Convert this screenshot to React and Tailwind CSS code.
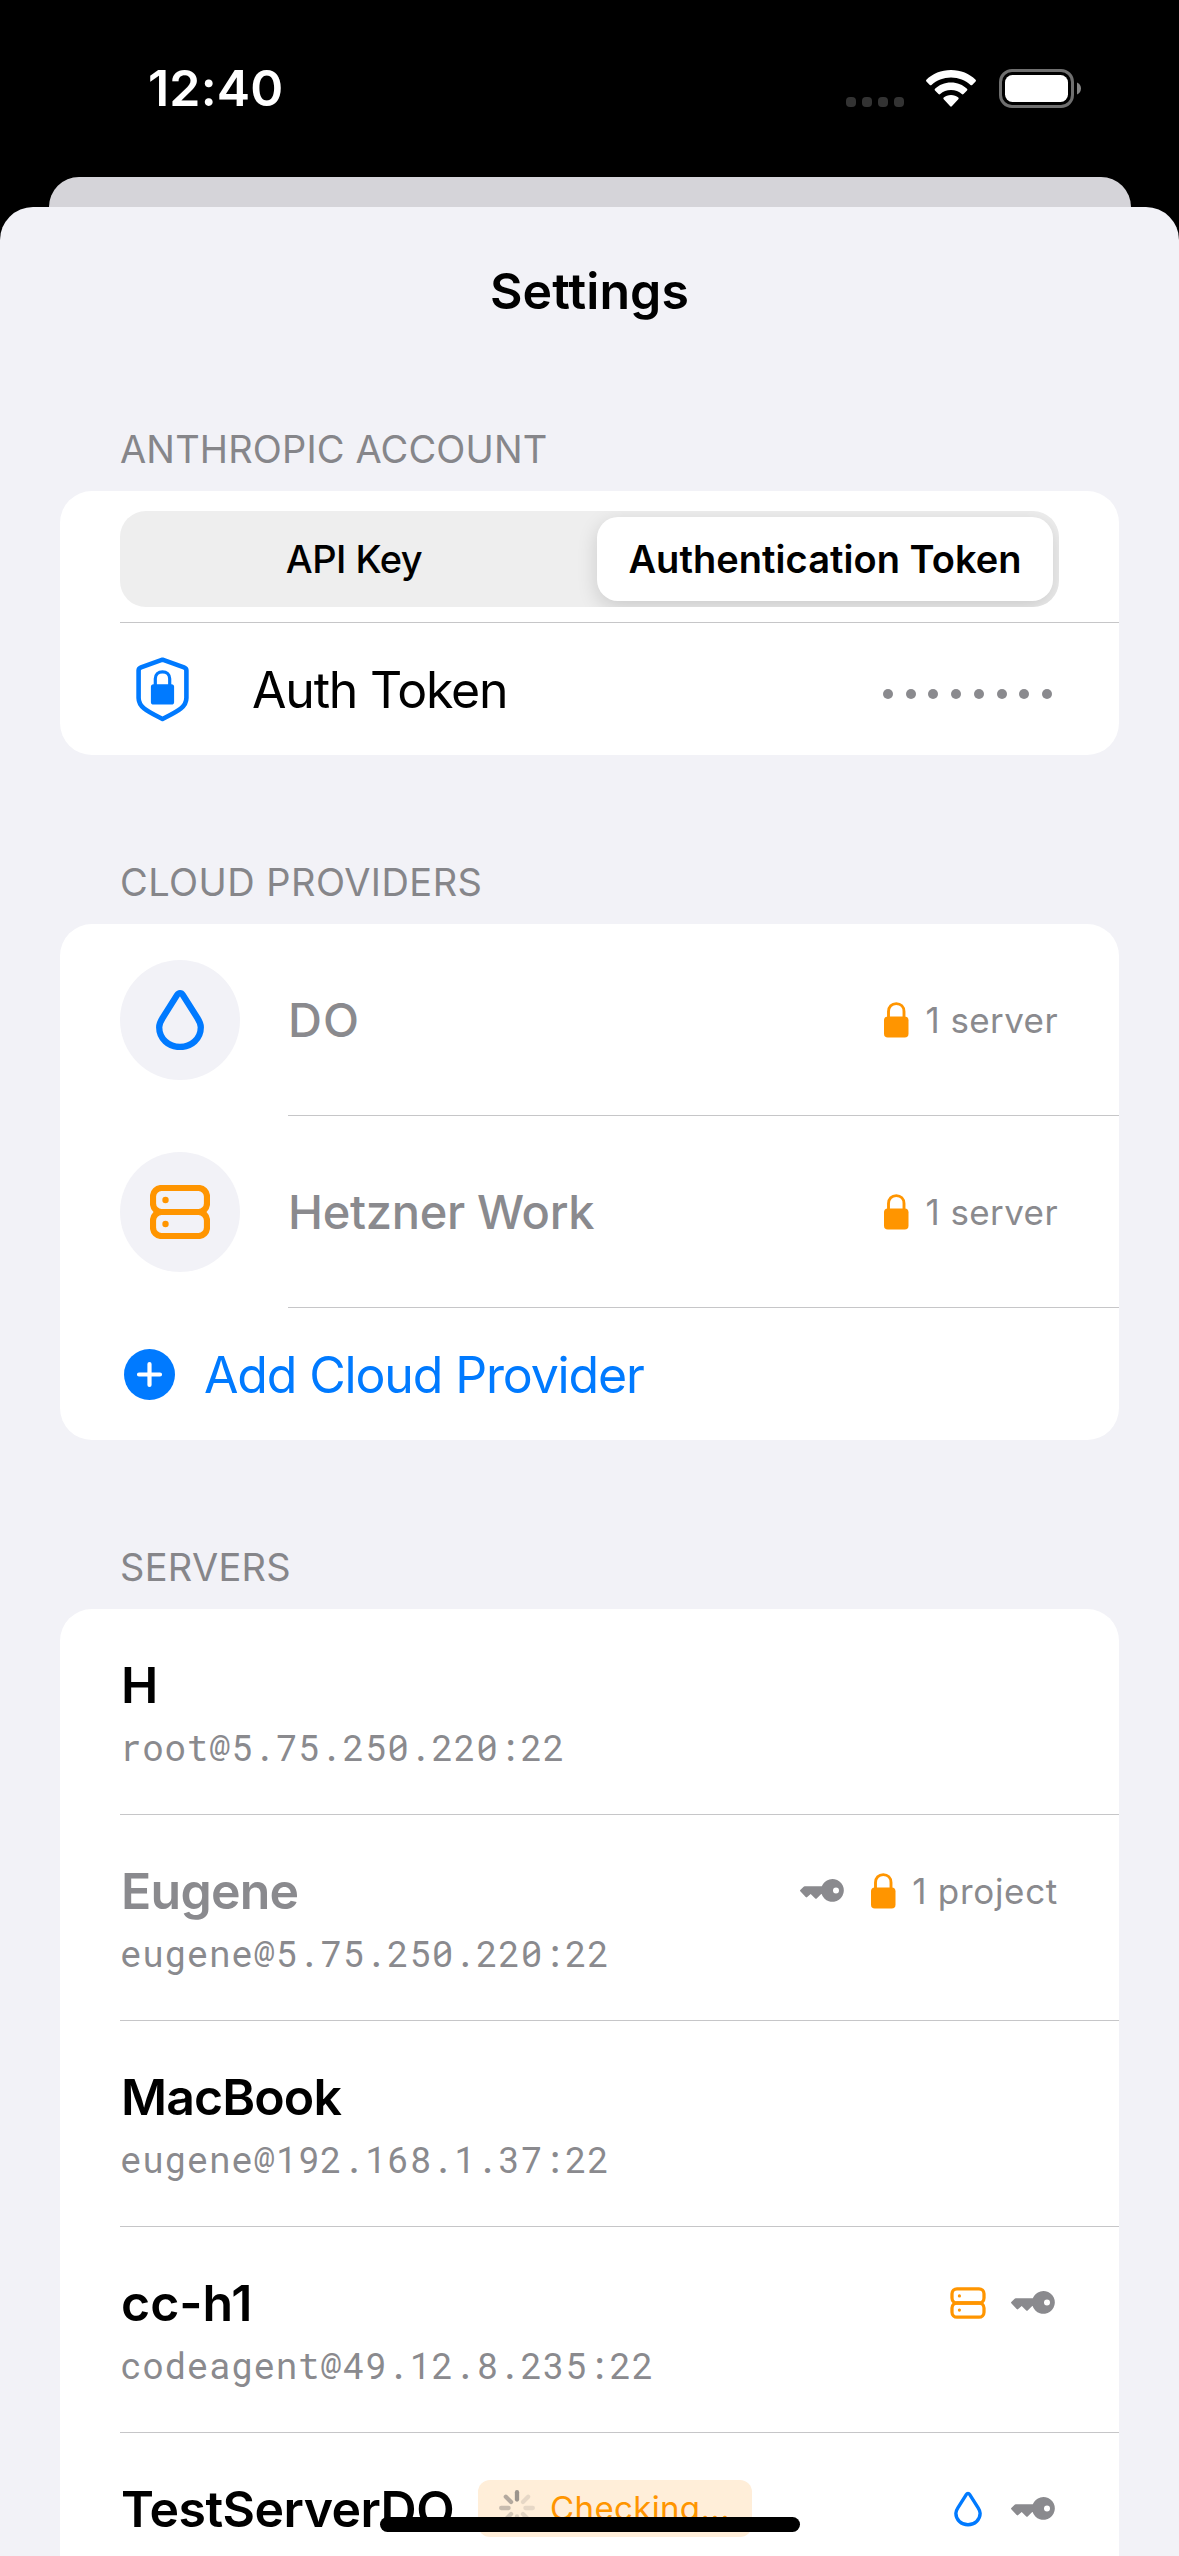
function WifiIcon() {
  return (
    <svg width="50" height="37" viewBox="0 0 50 37" fill="#fff">
      <path d="M25 0C34.800 0 43.500 3.700 49.600 9.700C50.100 10.200 50.100 10.900 49.600 11.400L46.200 14.900C45.700 15.400 45 15.400 44.500 14.900C39.400 10.300 32.600 7.500 25 7.500C17.400 7.500 10.600 10.300 5.500 14.900C5 15.400 4.300 15.400 3.800 14.900L.4 11.400C-.1 10.900-.1 10.200 .4 9.700C6.500 3.700 15.200 0 25 0Z" />
      <path d="M25 12.500C31.400 12.500 36.900 14.900 41 18.800C41.500 19.300 41.500 20 41 20.500L37.500 24C37 24.500 36.300 24.500 35.800 24C33 21.500 29.200 20 25 20C20.800 20 17 21.500 14.200 24C13.700 24.500 13 24.500 12.500 24L9 20.500C8.500 20 8.500 19.300 9 18.800C13.100 14.900 18.600 12.500 25 12.500Z" />
      <path d="M25 25C27.900 25 30.400 26 32.300 27.600C32.800 28.100 32.800 28.800 32.300 29.300L25.800 36.300C25.300 36.800 24.700 36.800 24.200 36.300L17.700 29.300C17.200 28.800 17.200 28.100 17.700 27.600C19.600 26 22.100 25 25 25Z" />
    </svg>
  );
}

function BatteryIcon() {
  return (
    <svg width="82" height="39" viewBox="0 0 82 39">
      <rect x="1.500" y="1.500" width="72" height="36" rx="11.500" fill="none" stroke="#6f6f6f" strokeWidth="3" />
      <rect x="6" y="6" width="63" height="27" rx="7.500" fill="#fff" />
      <path d="M78 13.500C80.400 14.500 82 16.800 82 19.500S80.400 24.500 78 25.500Z" fill="#858585" />
    </svg>
  );
}

function ShieldIcon() {
  return (
    <svg width="53" height="65" viewBox="0 0 53 65" fill="none" stroke="#007aff">
      <path d="M26.500 2.700L48 10.300C49.600 10.900 50.400 11.800 50.400 13.400V41C50.400 50.500 41 54.500 26.500 62C12 54.500 2.600 50.500 2.600 41V13.400C2.600 11.800 3.400 10.900 5 10.300Z" strokeWidth="4.600" strokeLinejoin="round" />
      <rect x="14.900" y="27.200" width="23.200" height="20.300" rx="2.600" fill="#007aff" stroke="none" />
      <path d="M19.300 29V21.800C19.300 17.600 22.300 14.800 26.500 14.800S33.700 17.600 33.700 21.800V29" strokeWidth="3.200" />
    </svg>
  );
}

function DropIcon({ width, height, stroke }) {
  return (
    <svg width={width} height={height} viewBox="0 0 48 60" fill="none" stroke="#007aff" strokeWidth={stroke} strokeLinejoin="round">
      <path d="M24 3.200C22.700 3.200 21.800 3.900 21 5.200L6.600 28C4.300 31.600 3.200 34.300 3.200 37.300C3.200 48.600 12.500 57 24 57S44.800 48.600 44.800 37.300C44.800 34.300 43.700 31.600 41.400 28L27 5.200C26.200 3.900 25.300 3.200 24 3.200Z" />
    </svg>
  );
}

function ServerIcon({ width, height, stroke, dot }) {
  return (
    <svg width={width} height={height} viewBox="0 0 60 54" fill="none" stroke="#ff9500" strokeWidth={stroke}>
      <rect x="3" y="3" width="54" height="24" rx="8.500" />
      <rect x="3" y="27" width="54" height="24" rx="8.500" />
      <circle cx="15.500" cy="15" r={dot} fill="#ff9500" stroke="none" />
      <circle cx="15.500" cy="39" r={dot} fill="#ff9500" stroke="none" />
    </svg>
  );
}

function PlusIcon() {
  return (
    <svg width="51" height="51" viewBox="0 0 51 51">
      <circle cx="25.500" cy="25.500" r="25.500" fill="#007aff" />
      <path d="M25.500 15V36M15 25.500H36" stroke="#fff" strokeWidth="4.200" strokeLinecap="round" />
    </svg>
  );
}

function LockIcon() {
  return (
    <svg width="25" height="36" viewBox="0 0 25 36">
      <rect x="0" y="14.500" width="24.500" height="21" rx="3.800" fill="#ff9500" />
      <path d="M4.500 17V9.600C4.500 4.800 7.800 1.600 12.250 1.600S20 4.800 20 9.600V17" fill="none" stroke="#ff9500" strokeWidth="2.900" />
    </svg>
  );
}

function KeyIcon() {
  return (
    <svg width="44" height="23" viewBox="0 0 44 23" fill="#8a8a8e">
      <path fillRule="evenodd" d="M.3 10.900L3.400 7.900C3.800 7.500 4.200 7.300 4.800 7.300H21.800A11.400 11.400 0 1 1 21.600 15L21.200 14.900L16.700 19.400C16.200 19.900 15.700 19.900 15.200 19.400L10.700 14.900L7.200 18C6.700 18.500 6.200 18.500 5.700 18L.3 12.300C-.1 11.900-.1 11.300 .3 10.900ZM36 8.400A3 3 0 1 0 36 14.400A3 3 0 1 0 36 8.400Z" />
    </svg>
  );
}

const BLADES = [0.5, 0.12, 0.12, 0.14, 0.17, 0.22, 0.28, 0.38];

function Spinner() {
  return (
    <svg width="36" height="36" viewBox="-18 -18 36 36" stroke="#3c3c43" strokeWidth="4.300" strokeLinecap="round">
      {BLADES.map((opacity, i) => (
        <line key={i} x1="0" y1="-8.400" x2="0" y2="-15.800" opacity={opacity} transform={`rotate(${i * 45})`} />
      ))}
    </svg>
  );
}

function StatusBar() {
  return (
    <div className="flex h-[177px] items-start justify-between pt-[58px] pr-[98px] pl-[148px] text-white">
      <span className="text-[50px] leading-[60px] font-semibold tracking-[0.2px]">12:40</span>
      <div className="flex h-[60px] items-center">
        <div className="mt-[27px] mr-[22px] flex gap-1.5">
          {[0, 1, 2, 3].map((i) => (
            <span key={i} className="size-2.5 rounded-[4px] bg-[#333333]" />
          ))}
        </div>
        <div className="mr-[23px]">
          <WifiIcon />
        </div>
        <BatteryIcon />
      </div>
    </div>
  );
}

function Section({ title, className = "", children }) {
  return (
    <section className="px-[60px]">
      <h2 className={`pl-[60px] text-[38px] leading-[50px] text-[#86868a] ${className}`}>{title}</h2>
      <div className="mt-[17px] overflow-hidden rounded-[32px] bg-white">{children}</div>
    </section>
  );
}

function ProviderRow({ name, nameClass, icon, count }) {
  return (
    <div className="flex h-[192px] items-center pl-[60px]">
      <div className="flex size-[120px] shrink-0 items-center justify-center rounded-full bg-[#f2f2f7]">{icon}</div>
      <div className="ml-[48px] flex h-full flex-1 items-center justify-between border-b border-[#c6c6c8] pr-[61px]">
        <span className={`text-[47px] leading-[60px] font-medium text-[#8a8a8e] ${nameClass}`}>{name}</span>
        <div className="flex items-center gap-[17px]">
          <LockIcon />
          <span className="text-[35px] leading-[44px] tracking-[0.4px] text-[#8a8a8e]">{count}</span>
        </div>
      </div>
    </div>
  );
}

function ServerRow({ name, nameClass = "text-black", host, badge, children }) {
  return (
    <div className="pl-[60px]">
      <div className="h-[206px] border-b border-[#c6c6c8] pt-[46px] pr-[61px]">
        <div className="flex h-[60px] items-center">
          <span className={`ml-px text-[50px] leading-[60px] font-semibold ${nameClass}`}>{name}</span>
          {badge}
          <div className="mb-px ml-auto flex items-center">{children}</div>
        </div>
        {host && (
          <div className="mt-[10px] text-[36px] leading-[44px] tracking-[0.66px] text-[#8a8a8e] [font-family:'Roboto_Mono','DejaVu_Sans_Mono',monospace]">
            {host}
          </div>
        )}
      </div>
    </div>
  );
}

export default function App() {
  return (
    <div className="relative h-[2556px] w-[1179px] overflow-hidden bg-black [font-family:Inter,'Liberation_Sans',sans-serif]">
      <StatusBar />
      <div className="mx-[48.5px] h-[30px] rounded-t-[30px] bg-[#d5d4d9]" />
      <main className="h-[2349px] rounded-t-[33px] bg-[#f2f2f7]">
        <h1 className="pt-[54px] pb-[103px] text-center text-[50px] leading-[60px] font-semibold tracking-[0.1px]">Settings</h1>

        <Section title="ANTHROPIC ACCOUNT" className="tracking-[0.14px]">
          <div className="px-[60px] pt-5 pb-[15px]">
            <div className="flex h-24 overflow-hidden rounded-[26px] bg-[#eeeeee] p-1.5 text-[38px]">
              <div className="flex w-[471px] items-center justify-center pr-[15px] font-medium tracking-[-0.5px]">API Key</div>
              <div className="flex flex-1 items-center justify-center rounded-[21px] bg-white font-semibold tracking-[0.05px] shadow-[0_6px_20px_rgba(0,0,0,0.15)]">
                Authentication Token
              </div>
            </div>
          </div>
          <div className="ml-[60px] h-px bg-[#c6c6c8]" />
          <div className="flex h-[132px] items-center pr-[67px] pl-[76px]">
            <ShieldIcon />
            <span className="mt-0.5 ml-[63px] text-[50px] leading-[60px] tracking-[-1.2px]">Auth Token</span>
            <div className="mt-[9px] ml-auto flex gap-[12.75px]">
              {[0, 1, 2, 3, 4, 5, 6, 7].map((i) => (
                <span key={i} className="size-2.5 rounded-full bg-[#8a8a8e]" />
              ))}
            </div>
          </div>
        </Section>

        <div className="h-[102px]" />
        <Section title="CLOUD PROVIDERS" className="tracking-[0.45px]">
          <ProviderRow name="DO" nameClass="tracking-[1px]" count="1 server" icon={<DropIcon width={48} height={60} stroke={6.300} />} />
          <ProviderRow
            name="Hetzner Work"
            nameClass="tracking-[-0.3px]"
            count="1 server"
            icon={<ServerIcon width={60} height={54} stroke={6.200} dot={3.200} />}
          />
          <div className="flex h-[132px] items-center pl-[64px] text-[#007aff]">
            <PlusIcon />
            <span className="mt-0.5 ml-[29px] text-[50px] leading-[60px] tracking-[-1.15px]">Add Cloud Provider</span>
          </div>
        </Section>

        <div className="h-[102px]" />
        <Section title="SERVERS" className="tracking-[0.3px]">
          <ServerRow name="H" host="root@5.75.250.220:22" />
          <ServerRow name="Eugene" nameClass="tracking-[-0.75px] text-[#8a8a8e]" host="eugene@5.75.250.220:22">
            <KeyIcon />
            <div className="mr-[16px] ml-[27px]">
              <LockIcon />
            </div>
            <span className="text-[35px] leading-[44px] tracking-[0.69px] text-[#8a8a8e]">1 project</span>
          </ServerRow>
          <ServerRow name="MacBook" nameClass="tracking-[-0.9px] text-black" host="eugene@192.168.1.37:22" />
          <ServerRow name="cc-h1" host="codeagent@49.12.8.235:22">
            <ServerIcon width={36} height={32} stroke={5.500} dot={2.700} />
            <div className="mr-[3px] ml-[25px]">
              <KeyIcon />
            </div>
          </ServerRow>
          <ServerRow
            name="TestServerDO"
            nameClass="tracking-[-0.55px] text-black"
            badge={
              <div className="mb-0.5 ml-6 flex h-[57px] w-[274px] items-center rounded-[12px] bg-[#ffeed9] pl-[21px]">
                <Spinner />
                <span className="ml-[15px] text-[33px] leading-[44px] tracking-[0.35px] text-[#ff9500]">Checking...</span>
              </div>
            }
          >
            <DropIcon width={28} height={36} stroke={5.800} />
            <div className="mr-[3px] ml-[29px]">
              <KeyIcon />
            </div>
          </ServerRow>
        </Section>
      </main>
      <div className="absolute top-[2517px] left-[380px] h-[15px] w-[420px] rounded-full bg-black" />
    </div>
  );
}
